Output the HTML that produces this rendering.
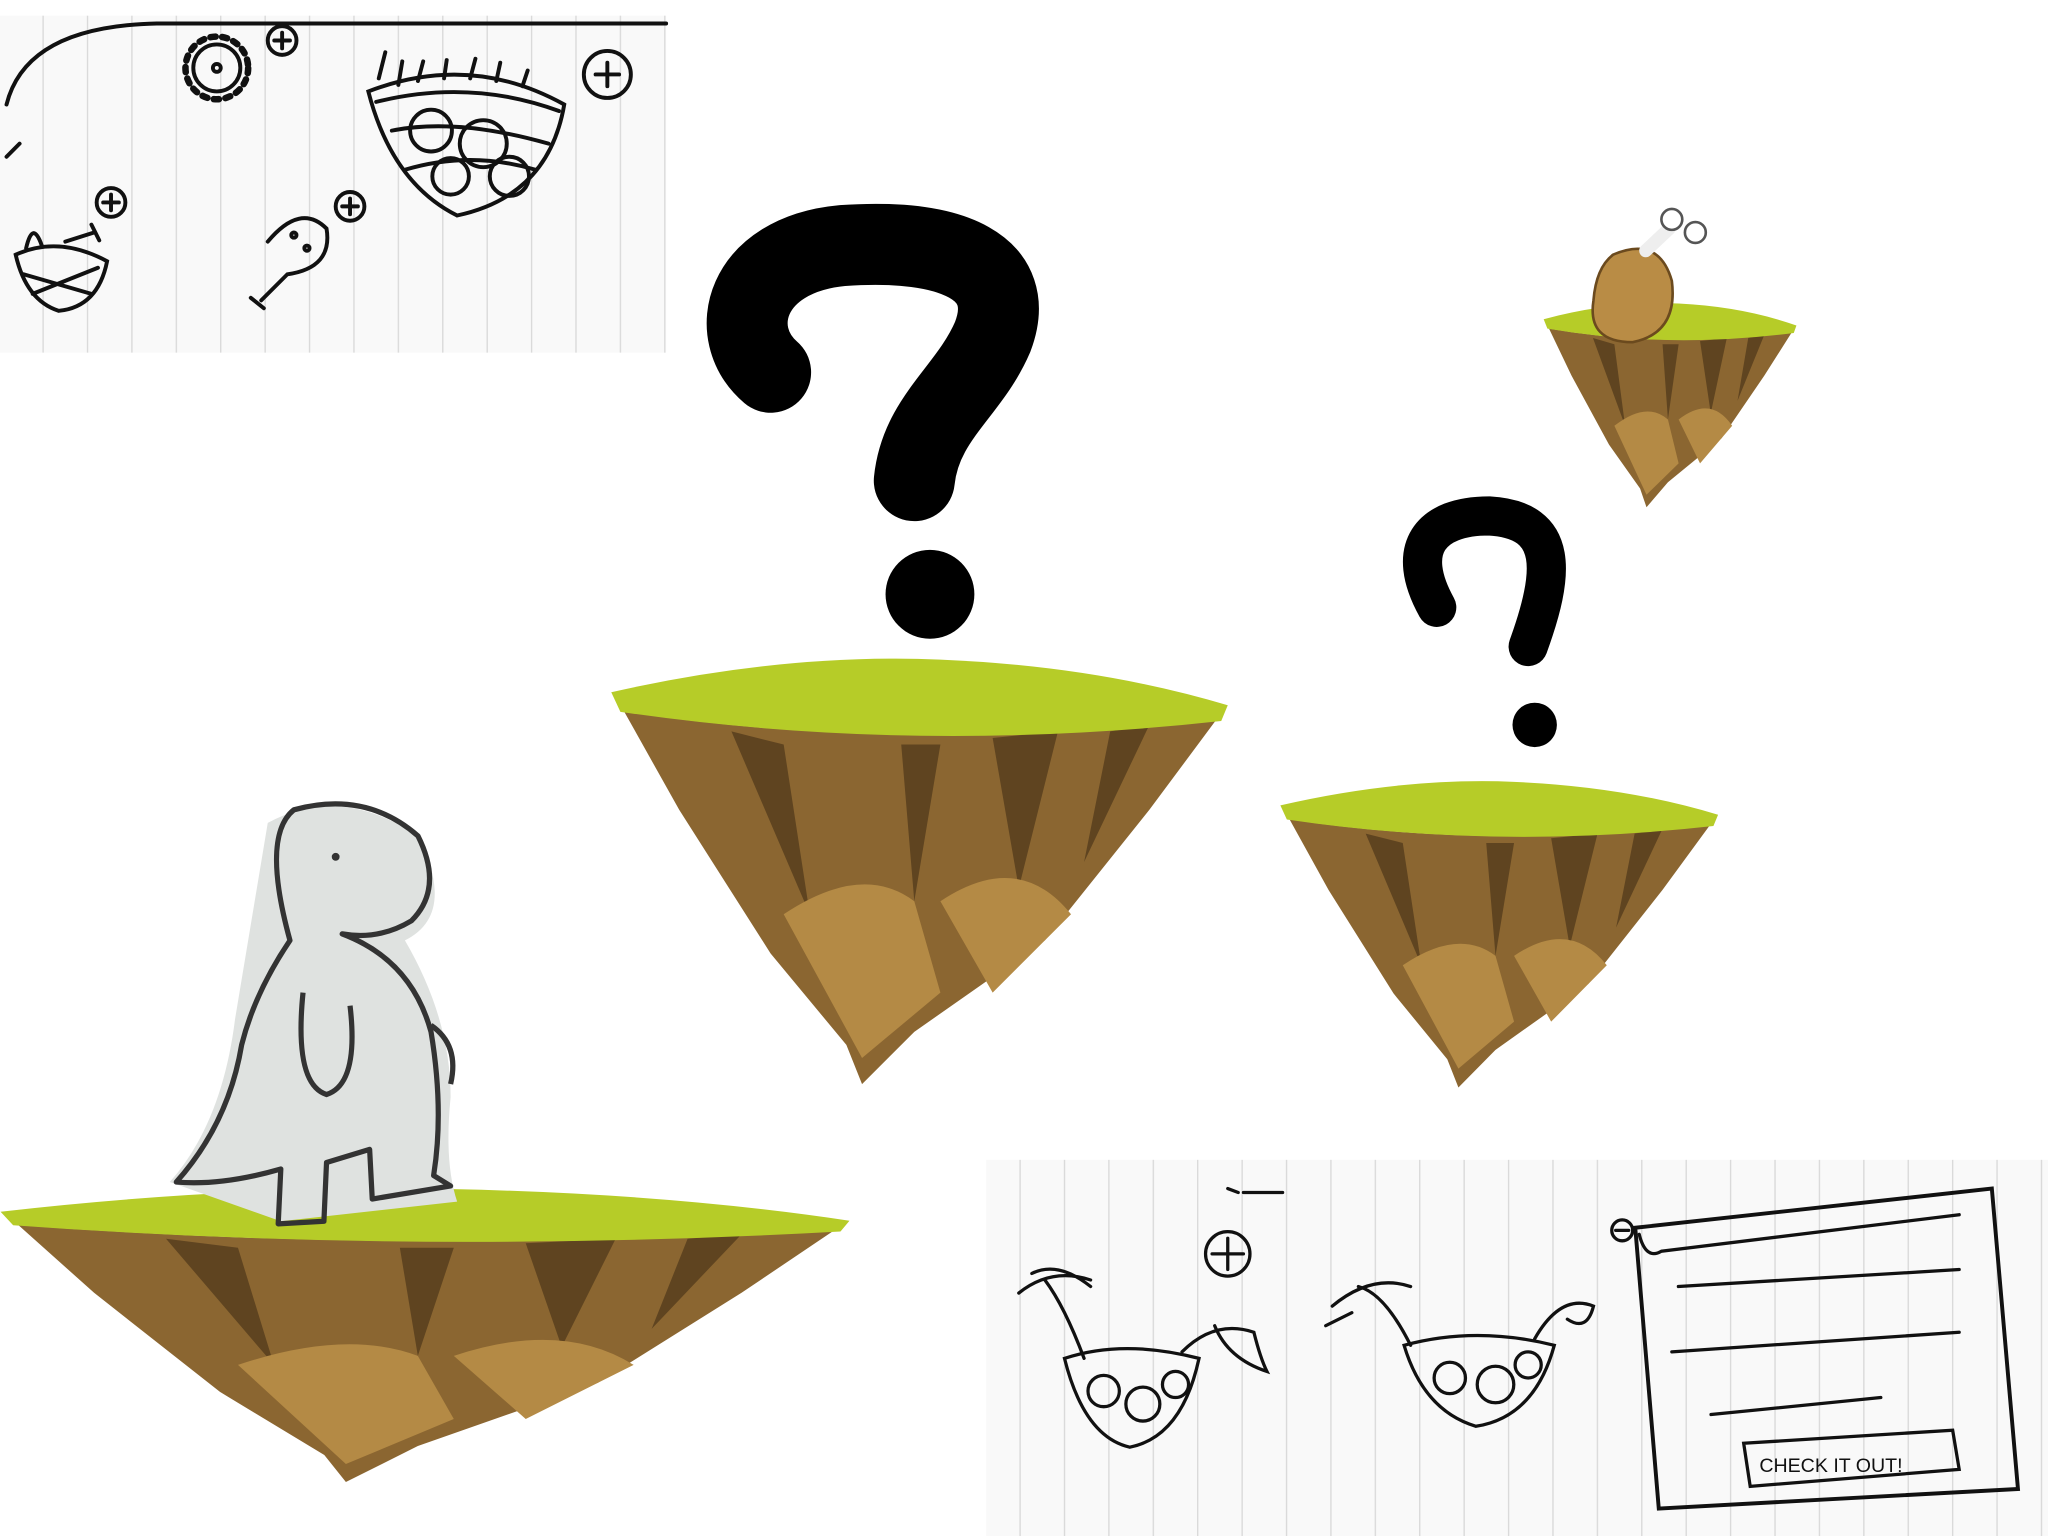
<!DOCTYPE html>
<html><head><meta charset="utf-8"><style>
html,body{margin:0;padding:0;background:#fff;width:2048px;height:1536px;overflow:hidden}
svg{display:block}
</style></head><body>
<svg width="2048" height="1536" viewBox="0 0 1568 1176" xmlns="http://www.w3.org/2000/svg">
<defs>
<pattern id="lines" width="34" height="40" patternUnits="userSpaceOnUse">
<rect width="34" height="40" fill="#f9f9f9"/><line x1="33" y1="0" x2="33" y2="40" stroke="#d8d8d8" stroke-width="1"/>
</pattern>
<g id="isl">
<path d="M478,545 Q700,578 932,550 L880,620 L800,720 L700,790 L660,830 L648,800 L590,730 L520,620 Z" fill="#8b6631"/>
<path d="M560,560 L620,700 L600,570Z M690,570 L700,690 L720,570Z M760,565 L780,680 L810,560Z M850,560 L830,660 L880,555Z" fill="#5f4420"/>
<path d="M600,700 Q660,660 700,690 L720,760 L660,810Z M720,690 Q780,650 820,700 L760,760Z" fill="#b48a45"/>
<path d="M468,530 Q600,500 720,505 Q840,510 940,540 L935,552 Q700,578 475,545 Z" fill="#b6cc28"/>
</g>
</defs>
<!-- top-left sketch -->
<rect x="0" y="12" width="510" height="258" fill="url(#lines)"/>
<g fill="none" stroke="#111" stroke-width="3" stroke-linecap="round">
<path d="M5,80 Q20,20 120,18 L510,18"/>
<path d="M5,120 L15,110"/>
<circle cx="166" cy="52" r="18"/><circle cx="166" cy="52" r="3"/>
<circle cx="166" cy="52" r="24" stroke-dasharray="4 5" stroke-width="5"/>
<circle cx="216" cy="31" r="11"/><path d="M210,31h12M216,25v12"/>
<circle cx="465" cy="57" r="18"/><path d="M456,57h18M465,48v18"/>
<path d="M282,70 Q360,40 432,80 Q420,150 350,165 Q300,140 282,70Z"/>
<path d="M288,78 Q360,60 428,85 M300,100 Q350,90 420,110 M310,130 Q360,115 410,130"/>
<circle cx="330" cy="100" r="16"/><circle cx="370" cy="110" r="18"/><circle cx="390" cy="135" r="15"/><circle cx="345" cy="135" r="14"/>
<path d="M290,60 L295,40 M305,65 l3,-18 M320,62 l4,-15 M340,60 l2,-14 M360,60 l4,-15 M380,62 l3,-14 M400,66 l4,-12"/>
<circle cx="85" cy="155" r="11"/><path d="M79,155h12M85,149v12"/>
<circle cx="268" cy="158" r="11"/><path d="M262,158h12M268,152v12"/>
<path d="M12,195 Q45,180 82,200 Q75,235 45,238 Q20,230 12,195Z"/><path d="M20,190 Q25,168 32,188 M18,210 L70,225 M25,225 L75,205"/>
<path d="M50,185 L72,178 M70,172 l6,12"/>
<path d="M205,185 Q230,155 250,175 Q255,205 220,210 L200,230 M192,228 l10,8"/>
<circle cx="225" cy="180" r="2"/><circle cx="235" cy="190" r="2"/>
</g>
<!-- bottom-right sketch -->
<rect x="755" y="888" width="813" height="288" fill="url(#lines)"/>
<g fill="none" stroke="#111" stroke-width="2.5" stroke-linecap="round">
<circle cx="940" cy="960" r="17"/><path d="M928,960h24M940,948v24"/>
<path d="M940,910 l8,3 M952,913 h30"/>
<path d="M815,1040 Q860,1025 918,1040 Q905,1100 865,1108 Q830,1100 815,1040Z"/>
<circle cx="845" cy="1065" r="12"/><circle cx="875" cy="1075" r="13"/><circle cx="900" cy="1060" r="10"/>
<path d="M830,1040 Q815,1000 800,980 M790,975 Q810,965 835,985 M780,990 q25,-20 55,-10"/>
<path d="M905,1035 Q930,1010 960,1020 Q965,1040 970,1050 Q940,1040 930,1015"/>
<path d="M1075,1030 Q1130,1015 1190,1030 Q1175,1085 1130,1092 Q1090,1080 1075,1030Z"/>
<circle cx="1110" cy="1055" r="12"/><circle cx="1145" cy="1060" r="14"/><circle cx="1170" cy="1045" r="10"/>
<path d="M1080,1030 Q1060,990 1040,985 M1020,1000 q30,-25 60,-15 M1015,1015 l20,-10"/>
<path d="M1175,1025 Q1195,990 1220,1000 Q1215,1020 1200,1010"/>
<path d="M1252,940 L1525,910 L1545,1140 L1270,1155 Z" stroke-width="3"/>
<path d="M1255,945 Q1260,965 1272,958 L1500,930"/>
<circle cx="1242" cy="942" r="8"/><path d="M1237,942h10"/>
<path d="M1285,985 L1500,972 M1280,1035 L1500,1020 M1310,1083 L1440,1070"/>
<path d="M1335,1105 L1495,1095 L1500,1125 L1340,1138 Z"/>
</g>
<text x="1347" y="1127" font-family="Liberation Sans, sans-serif" font-size="15" fill="#111">CHECK IT OUT!</text>
<!-- islands -->
<use href="#isl"/>
<use href="#isl" transform="translate(-644,562) scale(1.377 0.69)"/>
<use href="#isl" transform="translate(648,235) scale(0.71 0.72)"/>
<use href="#isl" transform="translate(990,-10) scale(0.41 0.48)"/>
<!-- question marks -->
<path d="M590,285 C555,255 570,195 645,188 C730,182 780,205 760,258 C742,300 705,320 700,368" fill="none" stroke="#000" stroke-width="62" stroke-linecap="round"/>
<circle cx="712" cy="455" r="34" fill="#000"/>
<path d="M1100,465 C1075,420 1095,395 1140,395 C1195,398 1190,440 1170,495" fill="none" stroke="#000" stroke-width="30" stroke-linecap="round"/>
<circle cx="1175" cy="555" r="17" fill="#000"/>
<!-- chicken leg -->
<path d="M1235,195 Q1270,180 1280,215 Q1285,255 1250,262 Q1215,262 1220,230 Q1222,205 1235,195Z" fill="#b98c45" stroke="#6b4a1e" stroke-width="2"/>
<path d="M1260,192 L1278,175" stroke="#eee" stroke-width="10" stroke-linecap="round"/>
<circle cx="1280" cy="168" r="8" fill="#fff" stroke="#555" stroke-width="2"/><circle cx="1298" cy="178" r="8" fill="#fff" stroke="#555" stroke-width="2"/>
<!-- dino -->
<path d="M205,630 Q260,600 320,640 Q350,700 310,720 Q345,780 345,840 Q340,890 350,920 L215,935 L130,905 Q170,860 180,780 Q190,720 205,630Z" fill="#dfe2e0"/>
<path d="M222,720 Q200,640 225,620 Q280,605 320,640 Q340,680 315,705 Q290,720 262,715 Q315,735 330,790 Q340,850 332,900 L345,908 L285,918 L283,880 L250,890 L248,935 L213,937 L215,895 Q170,908 135,905 Q175,860 185,800 Q195,760 222,720Z" fill="none" stroke="#333" stroke-width="4" stroke-linejoin="round"/>
<path d="M232,760 Q225,830 250,838 Q275,830 268,770" fill="none" stroke="#333" stroke-width="4"/>
<path d="M330,785 Q352,800 345,830" fill="none" stroke="#333" stroke-width="4"/>
<circle cx="257" cy="656" r="3" fill="#333"/>
</svg>
</body></html>
